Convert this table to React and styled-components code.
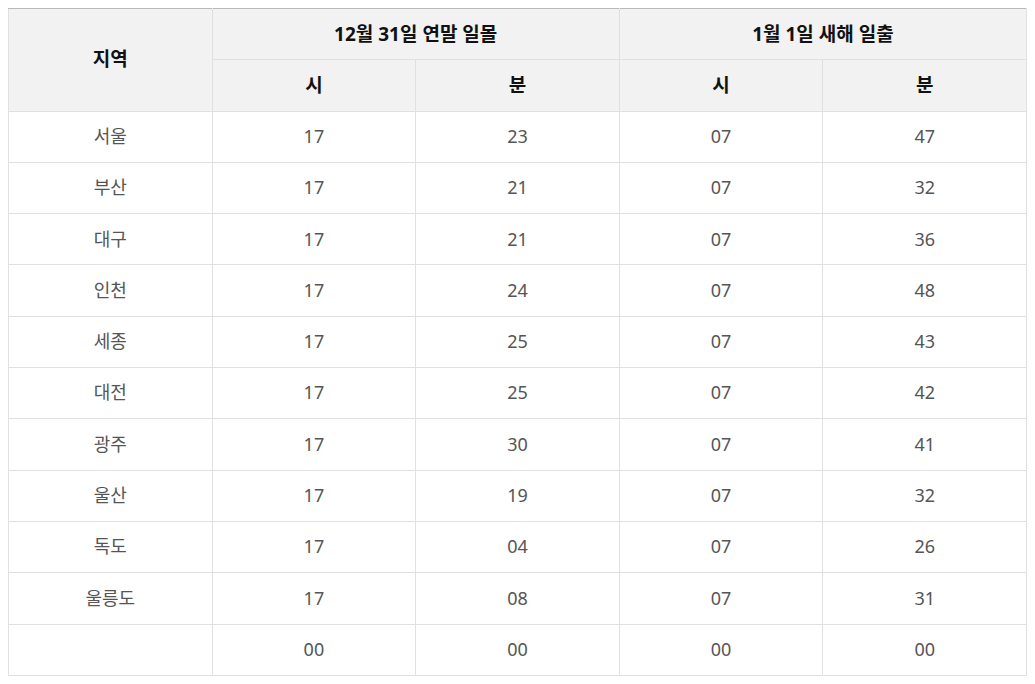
import React from "react";
import styled, { createGlobalStyle } from "styled-components";

const Global = createGlobalStyle`
  body {
    margin: 8px;
    background: #fff;
    font-family: "Noto Sans", "Noto Sans CJK KR", sans-serif;
  }
`;

const Table = styled.table`
  width: 100%;
  border-collapse: collapse;
  table-layout: fixed;
  border-top: 1px solid #b8b8b8;
`;

const Th = styled.th`
  height: 50.3px;
  padding: 0 8px;
  background: #f2f2f2;
  border: 1px solid #e0e0e0;
  border-top-color: ${(p) => (p.$top ? "#b8b8b8" : "#e0e0e0")};
  color: #111;
  font-size: 19px;
  font-weight: 700;
  line-height: 1.2;
  text-align: center;
  vertical-align: middle;
`;

const Td = styled.td`
  height: 50.3px;
  padding: 0 8px;
  border: 1px solid #e0e0e0;
  color: #555;
  font-size: 18px;
  font-weight: 400;
  line-height: 1.2;
  text-align: center;
  vertical-align: middle;
`;

const rows = [
  ["서울", "17", "23", "07", "47"],
  ["부산", "17", "21", "07", "32"],
  ["대구", "17", "21", "07", "36"],
  ["인천", "17", "24", "07", "48"],
  ["세종", "17", "25", "07", "43"],
  ["대전", "17", "25", "07", "42"],
  ["광주", "17", "30", "07", "41"],
  ["울산", "17", "19", "07", "32"],
  ["독도", "17", "04", "07", "26"],
  ["울릉도", "17", "08", "07", "31"],
  ["", "00", "00", "00", "00"],
];

export default function App() {
  return (
    <>
      <Global />
      <Table>
        <thead>
          <tr>
            <Th rowSpan={2} $top>지역</Th>
            <Th colSpan={2} $top>12월 31일 연말 일몰</Th>
            <Th colSpan={2} $top>1월 1일 새해 일출</Th>
          </tr>
          <tr>
            <Th>시</Th>
            <Th>분</Th>
            <Th>시</Th>
            <Th>분</Th>
          </tr>
        </thead>
        <tbody>
          {rows.map((r, i) => (
            <tr key={i}>
              {r.map((c, j) => (
                <Td key={j}>{c}</Td>
              ))}
            </tr>
          ))}
        </tbody>
      </Table>
    </>
  );
}
